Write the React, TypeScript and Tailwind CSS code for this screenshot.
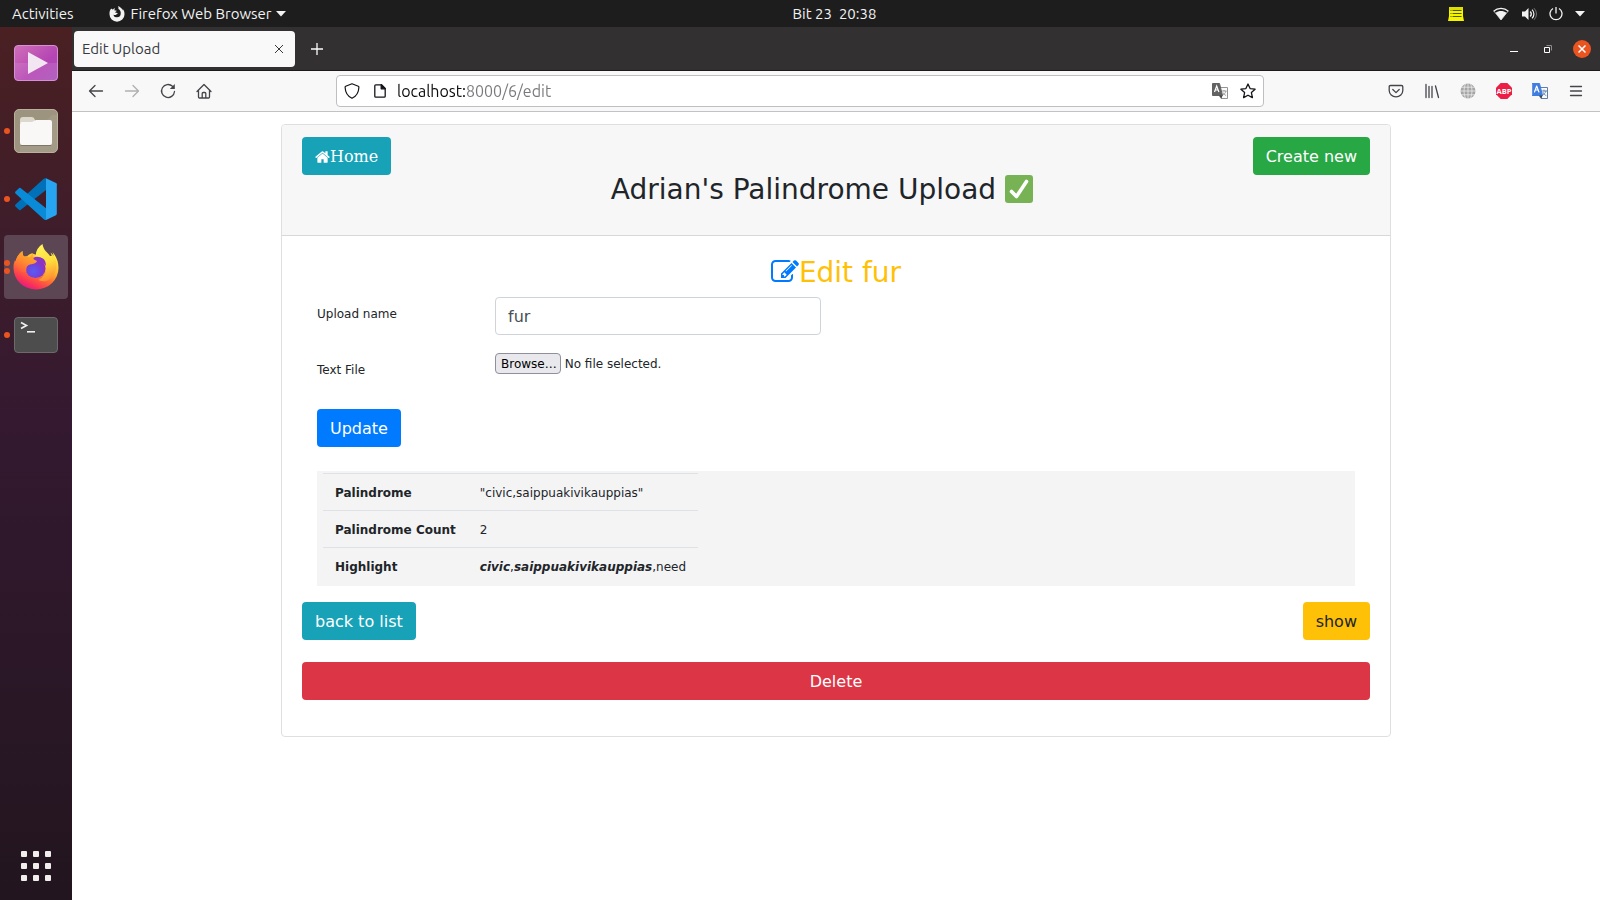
import type { ReactNode } from "react";

const UI_FONT = "font-['Ubuntu','Noto_Sans',sans-serif]";

function SystemBar() {
  return (
    <header className="flex h-[27px] shrink-0 items-center bg-[#1d1d1d] text-[15px] leading-5 text-[#f2f2f2]">
      <div className="flex flex-1 items-center pl-3">
        <button type="button">Activities</button>
        <button type="button" className="ml-[35px] flex items-center">
          <svg viewBox="0 0 16 16" className="mr-[6px] size-4" fill="#f2f2f2" aria-hidden="true">
            <path d="M2.200 2.400C.9 3.800.3 6 .5 8.300a7.500 7.300 0 0 0 15 .1c.1-2.300-.5-4.300-2-5.700.2.700.3 1.200.2 1.700C12.800 2.200 11 .9 9.100.1c.4 1.100.5 2 .3 2.900 1.800.8 2.600 2.800 2.300 4.900a3.900 3.900 0 0 1-7.600.6c.6.6 1.600.8 2.500.4C7.400 8.500 7.900 8 8.800 7.700c-.5-1-1.500-1.200-2.600-1 .1-.8.600-1.300 1.500-1.800-.6-.4-1.300-.4-2-.1-.3-.6-.3-1.500.1-2.700-.9.400-1.400.9-1.800 1.500-.6-.1-1.200-.5-1.800-1.200z" />
          </svg>
          Firefox Web Browser
          <svg viewBox="0 0 10 6" className="ml-1 h-[6px] w-[10px]" fill="#f2f2f2" aria-hidden="true">
            <path d="M0 0h10L5 5.500z" />
          </svg>
        </button>
      </div>
      <button type="button" className="whitespace-pre pl-[72px]">
        Bit 23  20:38
      </button>
      <div className="flex flex-1 items-center justify-end pr-[15px]">
        <svg viewBox="0 0 16 14" className="mr-[29px] h-[14px] w-4" aria-hidden="true">
          <path d="M1 0h14v9l1 5H0l1-5z" fill="#f4f400" />
          <path d="M1 0h14v3H1z" fill="#dede00" />
          <path d="M2.500 3.500h1m1 0h9m-11 3h1m1 0h9m-11 3h1m1 0h9" stroke="#55550a" strokeWidth="1" />
        </svg>
        <svg viewBox="0 0 16 14" className="mr-3 h-[14px] w-4" aria-hidden="true">
          <path d="M.6 4.200C4.800.4 11.200.4 15.400 4.200" fill="none" stroke="#f2f2f2" strokeWidth="1.200" />
          <path d="M2.500 6C5.700 3.400 10.300 3.400 13.500 6L8 13z" fill="#f2f2f2" />
          <path d="M1 4.200L8 13l7-8.800" fill="none" stroke="#f2f2f2" strokeWidth=".7" />
        </svg>
        <svg viewBox="0 0 16 14" className="mr-3 h-[14px] w-4" aria-hidden="true">
          <path d="M1 4.500h3L7.500 1v12L4 9.500H1z" fill="#f2f2f2" />
          <path d="M9.200 4.500a3.500 3.500 0 0 1 0 5" fill="none" stroke="#f2f2f2" strokeWidth="1.400" />
          <path d="M11 2.600a6 6 0 0 1 0 8.800" fill="none" stroke="#f2f2f2" strokeWidth="1.200" />
          <path d="M13 1.200a8 8 0 0 1 0 11.600" fill="none" stroke="#777" strokeWidth="1" />
        </svg>
        <svg viewBox="0 0 14 14" className="mr-3 size-[14px]" fill="none" stroke="#f2f2f2" strokeWidth="1.300" aria-hidden="true">
          <path d="M4 1.500a6 6 0 1 0 6 0M7 0v6.500" />
        </svg>
        <svg viewBox="0 0 10 6" className="h-[6px] w-[10px]" fill="#f2f2f2" aria-hidden="true">
          <path d="M0 0h10L5 5.500z" />
        </svg>
      </div>
    </header>
  );
}

function DockItem({ label, dots = 0, active = false, children }: { label: string; dots?: number; active?: boolean; children: ReactNode }) {
  return (
    <button
      type="button"
      aria-label={label}
      className={`relative flex size-16 items-center justify-center rounded-[4px] ${active ? "bg-[#5c4653]" : ""}`}
    >
      <span className="absolute inset-y-0 left-0 flex flex-col items-center justify-center gap-[2px]">
        {Array.from({ length: dots }, (_, i) => (
          <span key={i} className="size-[6px] rounded-full bg-[#e95420]" />
        ))}
      </span>
      {children}
    </button>
  );
}

function Dock() {
  return (
    <nav className="flex w-[72px] shrink-0 flex-col items-center gap-1 bg-linear-to-b from-[#4a2022] via-[#341930] via-45% to-[#22151f] pt-1">
      <DockItem label="Videos">
        <svg viewBox="0 0 44 36" className="h-9 w-11">
          <defs>
            <linearGradient id="video" x1="0" y1="0" x2="1" y2="1">
              <stop offset="0" stopColor="#d070b8" />
              <stop offset=".6" stopColor="#b545b4" />
              <stop offset="1" stopColor="#a850b8" />
            </linearGradient>
          </defs>
          <rect x=".5" y=".5" width="43" height="35" rx="3.500" fill="url(#video)" stroke="#d58fd6" />
          <path d="M1 18h42v14a3 3 0 0 1-3 3H4a3 3 0 0 1-3-3z" fill="#fff" opacity=".1" />
          <path d="M14 7L34 18 14 29z" fill="#f3e6f3" />
        </svg>
      </DockItem>
      <DockItem label="Files" dots={1}>
        <svg viewBox="0 0 44 44" className="size-11">
          <rect x=".5" y=".5" width="43" height="43" rx="4.500" fill="#9d947f" stroke="#b8b29d" />
          <path d="M6 38L38 6h5v33a4 4 0 0 1-4 4H6z" fill="#fff" opacity=".07" />
          <path d="M6 11q0-3 3-3h9q2 0 3 3l1 3h-16z" fill="#dcd8cb" />
          <path d="M6 15q0-2 2-2h10l4-2h14q2 0 2 2v21q0 2-2 2H8q-2 0-2-2z" fill="#f9f8f6" />
          <path d="M7 36.500h30" stroke="#7e7765" />
        </svg>
      </DockItem>
      <DockItem label="Visual Studio Code" dots={1}>
        <svg viewBox="0 0 42 42" className="size-[42px]">
          <path d="M31 .3V12L5.500 32q-.7.500-1.300 0L.5 28.600q-.9-1 0-2L28.500.9Q29.600 0 31 .3z" fill="#0071b8" />
          <path d="M31 30.300V42q-1.500.1-2.500-.9L.5 15.400q-.9-1 0-2L4.200 10q.6-.5 1.300 0z" fill="#0a8bd8" />
          <path d="M31 .2l10 4.700q.8.500.8 1.400v29.500q0 .9-.8 1.400L31 42z" fill="#27a5f0" />
        </svg>
      </DockItem>
      <DockItem label="Firefox" dots={2} active>
        <svg viewBox="0 0 46 46" className="size-[46px]">
          <defs>
            <linearGradient id="flame" x1=".85" y1=".1" x2=".3" y2="1">
              <stop offset="0" stopColor="#fff04a" />
              <stop offset=".35" stopColor="#ffb32e" />
              <stop offset=".6" stopColor="#ff6a35" />
              <stop offset=".85" stopColor="#f9305a" />
              <stop offset="1" stopColor="#e2178c" />
            </linearGradient>
            <radialGradient id="globe" cx=".4" cy=".65" r=".65">
              <stop offset="0" stopColor="#5a5cf2" />
              <stop offset=".55" stopColor="#7042dc" />
              <stop offset="1" stopColor="#9a2cb4" />
            </radialGradient>
            <linearGradient id="crest" x1=".4" y1="0" x2=".6" y2="1">
              <stop offset="0" stopColor="#fff35a" />
              <stop offset=".5" stopColor="#ffdc3c" />
              <stop offset="1" stopColor="#ff8a32" />
            </linearGradient>
            <linearGradient id="head" x1=".7" y1="0" x2=".2" y2="1">
              <stop offset="0" stopColor="#ffb02c" />
              <stop offset=".5" stopColor="#ff8f30" />
              <stop offset="1" stopColor="#ff5a3c" />
            </linearGradient>
          </defs>
          <path d="M4.500 12.500Q6.500 9 9.500 7q-.2 4 1.500 5.500l3-.3q2.500-2.400 5-3L26 12h14.500q-.2-2.500-1-4Q45.500 15 45.500 24A22.500 21.500 0 0 1 .5 24Q.3 20 2 16l.6 1.500Q3 14.500 4.500 12.500z" fill="url(#flame)" />
          <path d="M22.500 12Q23 4 29.500 0 30 5 34.500 9q3.500 3.500 4.500 6.500.2-4-1.500-7Q45 14 43 25q-1.500 8-9.500 12-4 1-8-1 8-4 7.500-12Q32.500 16 22.500 12z" fill="url(#crest)" />
          <ellipse cx="22.500" cy="24.500" rx="10" ry="9.500" fill="url(#globe)" />
          <path d="M20 14q5-2.500 10 .5 3 2 3 7.500-3-4-6.500-4-4 0-6.500-4z" fill="#8a35c8" />
          <path d="M4.500 12.500Q6.500 9 9.500 7q-.2 4 1.500 5.500 3.500-.5 6 1Q18.500 11 20 9.200q-.5 4 .5 6l3.500 1.800q-.5 2-4.500 3-5.500.5-6 4-.5 2 0 4Q8 29 5.500 25 2 18 4.500 12.500z" fill="url(#head)" />
        </svg>
      </DockItem>
      <DockItem label="Terminal" dots={1}>
        <svg viewBox="0 0 44 36" className="h-9 w-11">
          <rect x=".5" y=".5" width="43" height="35" rx="3.500" fill="#4d4d4d" stroke="#6b6b6b" />
          <path d="M7 5.500l5.500 3L7 11.500" fill="none" stroke="#f0f0f0" strokeWidth="1.700" />
          <path d="M13 14.800h8" stroke="#f0f0f0" strokeWidth="1.600" />
        </svg>
      </DockItem>
      <button type="button" aria-label="Show applications" className="mt-auto mb-[19px] grid grid-cols-3 gap-[6px]">
        {Array.from({ length: 9 }, (_, i) => (
          <span key={i} className="size-[6px] rounded-[1px] bg-[#f0efeb]" />
        ))}
      </button>
    </nav>
  );
}

function TabStrip() {
  return (
    <div className="flex h-11 shrink-0 items-start border-b border-[#1c1a1b] bg-[#333031] pt-1 pl-[2px]">
      <div className="flex h-9 w-[221px] items-center justify-between rounded-[4px] bg-[#f9f9fa] pr-[11px] pl-2 text-[15px] text-[#3a3940]">
        Edit Upload
        <button type="button" aria-label="Close tab">
          <svg viewBox="0 0 10 10" className="size-[10px]" stroke="#3a3940" strokeWidth="1">
            <path d="M1 1l8 8M9 1L1 9" />
          </svg>
        </button>
      </div>
      <button type="button" aria-label="New tab" className="ml-4 flex h-9 items-center">
        <svg viewBox="0 0 12 12" className="size-3" stroke="#fbfbfe" strokeWidth="1.300">
          <path d="M6 0v12M0 6h12" />
        </svg>
      </button>
      <div className="ml-auto flex h-9 items-center pr-[9px]">
        <button type="button" aria-label="Minimize">
          <svg viewBox="0 0 8 8" className="size-2" stroke="#fff" strokeWidth="1">
            <path d="M0 6.500h8" />
          </svg>
        </button>
        <button type="button" aria-label="Restore" className="ml-[26px]">
          <svg viewBox="0 0 8 8" className="size-2" fill="none">
            <path d="M2.500.5h5v5" stroke="#8d8b8c" />
            <path d="M.5 2.500h5v5h-5z" stroke="#fff" strokeWidth="1" />
          </svg>
        </button>
        <button type="button" aria-label="Close window" className="ml-[21px] flex size-[18px] items-center justify-center rounded-full bg-[#e95420]">
          <svg viewBox="0 0 8 8" className="size-2" stroke="#fff" strokeWidth="1.500">
            <path d="M.5.5l7 7M7.500.5l-7 7" />
          </svg>
        </button>
      </div>
    </div>
  );
}

function ToolButton({ label, children }: { label: string; children: ReactNode }) {
  return (
    <button type="button" aria-label={label} className="flex h-8 w-9 shrink-0 items-center justify-center">
      <svg viewBox="0 0 16 16" className="size-4" fill="none" stroke="#45444b" strokeWidth="1.300" strokeLinecap="round" strokeLinejoin="round">
        {children}
      </svg>
    </button>
  );
}

function TranslateGlyph({ front, back }: { front: string; back: string }) {
  return (
    <>
      <path d="M7 4.500h8.500v11H9L7 12z" fill="#fbfbfb" stroke={back} strokeWidth="1" />
      <path d="M10 8h4.500M12 7v1m2 0c-.5 2-2 3.500-3.500 4M11 9.500c.5 1.500 2 2.500 3 3" stroke={back} strokeWidth=".9" />
      <path d="M.5.500h7l3 12H.5z" fill={front} stroke={front} strokeWidth="1" />
      <path d="M2.500 9L4.700 3l2.200 6M3.300 7h2.800" stroke="#fff" strokeWidth="1.200" />
      <path d="M7 12.500h3.500l-1 3z" fill="#444" stroke="none" />
    </>
  );
}

function Toolbar() {
  return (
    <div className="flex h-[41px] shrink-0 items-center border-b border-[#c2c2c4] bg-[#f8f8f8] px-[6px]">
      <ToolButton label="Back">
        <path d="M14.500 8H1.500M7 2.500L1.500 8 7 13.500" />
      </ToolButton>
      <ToolButton label="Forward">
        <path d="M1.500 8h13M9 2.500L14.500 8 9 13.500" stroke="#b0b0b2" />
      </ToolButton>
      <ToolButton label="Reload">
        <path d="M14.500 8.500a6.500 6.500 0 1 1-2-5.200" />
        <path d="M14.800 1v5h-5z" fill="#45444b" stroke="none" />
      </ToolButton>
      <ToolButton label="Home">
        <path d="M1 8.500L8 1.500l7 7M2.500 7.500V14q0 1 1 1h9q1 0 1-1V7.500M6.200 15v-4.500q0-1 1-1h1.600q1 0 1 1V15" />
      </ToolButton>
      <div className="flex-[57]" />
      <div className="flex h-8 min-w-0 flex-[456] items-center rounded-[4px] border border-[#bfbfc3] bg-white px-[7px]">
        <svg viewBox="0 0 16 16" className="size-4 shrink-0" fill="none" stroke="#15141a" strokeWidth="1.200" strokeLinejoin="round" aria-hidden="true">
          <path d="M8 .8l6.300 2.500q.6.300.6 1C14.700 9.500 12 13.500 8 15.300 4 13.500 1.300 9.500 1.100 4.300q0-.7.600-1z" />
        </svg>
        <svg viewBox="0 0 12 14" className="ml-[14px] h-[14px] w-3 shrink-0" fill="none" stroke="#15141a" strokeWidth="1.300" strokeLinejoin="round" aria-hidden="true">
          <path d="M1.800.8H7.500L11.200 4.500v7.700q0 1-1 1H1.800q-1 0-1-1V1.800q0-1 1-1z" />
          <path d="M7.200.8v4h4z" fill="#15141a" />
        </svg>
        <input
          type="text"
          aria-label="Address"
          defaultValue="localhost:8000/6/edit"
          className="ml-[11px] min-w-0 flex-1 bg-[linear-gradient(to_right,#0c0c0d_68px,#77777c_68px)] bg-clip-text text-[16px] leading-6 text-transparent caret-black outline-none"
        />
        <button type="button" aria-label="Translate page">
          <svg viewBox="0 0 16 16" className="size-4" fill="none">
            <TranslateGlyph front="#626262" back="#949494" />
          </svg>
        </button>
        <button type="button" aria-label="Bookmark" className="ml-3">
          <svg viewBox="0 0 16 16" className="size-4" fill="none" stroke="#15141a" strokeWidth="1.300" strokeLinejoin="round">
            <path d="M8 1l2.100 4.600 5 .6-3.700 3.400 1 5L8 12.200l-4.400 2.400 1-5L.9 6.200l5-.6z" />
          </svg>
        </button>
      </div>
      <div className="flex-[57]" />
      <ToolButton label="Pocket">
        <path d="M2.500 2.500h11q1.300 0 1.300 1.300V7.500a6.800 6.300 0 0 1-13.600 0V3.800q0-1.300 1.300-1.300z" />
        <path d="M4.800 6.500L8 9.600l3.200-3.100" />
      </ToolButton>
      <ToolButton label="Library">
        <path d="M2 1.500v13M5 3.500v11M8 3.500v11M11.500 3l3 11.500" />
      </ToolButton>
      <ToolButton label="Web">
        <circle cx="8" cy="8" r="7.500" fill="#a5a5a7" stroke="none" />
        <path d="M8 0v16M0 8h16M1.500 4.200h13M1.500 11.800h13M5.500 1C3.500 5 3.500 11 5.500 15M10.500 1c2 4 2 10 0 14" stroke="#ececec" strokeWidth=".8" />
      </ToolButton>
      <button type="button" aria-label="Adblock Plus" className="flex h-8 w-9 shrink-0 items-center justify-center">
        <svg viewBox="0 0 16 16" className="size-4">
          <path d="M4.700 0h6.600L16 4.700v6.600L11.300 16H4.700L0 11.300V4.700z" fill="#ed1e45" />
          <text x="8" y="10.700" textAnchor="middle" fontSize="7.500" fontWeight="700" fill="#fff" className="font-['Open_Sans',sans-serif]">
            ABP
          </text>
        </svg>
      </button>
      <ToolButton label="Translate">
        <TranslateGlyph front="#3f7de0" back="#5f7fa8" />
      </ToolButton>
      <ToolButton label="Menu">
        <path d="M2.500 3.500h11M2.500 8h11M2.500 12.500h11" />
      </ToolButton>
    </div>
  );
}

const BUTTON = "inline-flex h-[38px] items-center justify-center rounded-[4px] px-[13px] pt-[2px] text-[16px] leading-6";

function UploadForm() {
  return (
    <form className="flex flex-col gap-4" onSubmit={(event) => event.preventDefault()}>
      <div className="grid min-h-10 grid-cols-12 items-start">
        <label htmlFor="upload-name" className="col-span-2 px-[15px] pt-2">
          Upload name
        </label>
        <div className="col-span-4 px-[15px]">
          <input
            id="upload-name"
            type="text"
            defaultValue="fur"
            className="block h-[38px] w-full rounded-[4px] border border-[#ced4da] bg-white px-3 text-[16px] text-[#495057]"
          />
        </div>
      </div>
      <div className="grid min-h-10 grid-cols-12 items-start">
        <label htmlFor="text-file" className="col-span-2 px-[15px] pt-2">
          Text File
        </label>
        <div className="col-span-4 px-[15px]">
          <input id="text-file" type="file" className="peer sr-only" />
          <label htmlFor="text-file" className="flex items-center gap-1">
            <span className="flex h-[21px] items-center rounded-[4px] border border-[#8f8f9d] bg-[#e9e9ed] pr-[3px] pl-[5px] text-black">Browse…</span>
            No file selected.
          </label>
        </div>
      </div>
      <div className="px-[15px]">
        <button type="submit" className={`${BUTTON} bg-[#007bff] text-white`}>
          Update
        </button>
      </div>
    </form>
  );
}

function ResultTable() {
  const head = "h-[37px] px-3 pt-[2px] text-left font-bold";
  const cell = "h-[37px] px-3 pt-[2px]";
  const row = "border-t border-[#dee2e6]";
  return (
    <div className="mx-[15px] mt-6 bg-[#f4f4f4] px-[6px] pt-[2px] pb-px">
      <table className="border-collapse">
        <tbody>
          <tr className={row}>
            <th scope="row" className={head}>Palindrome</th>
            <td className={cell}>"civic,saippuakivikauppias"</td>
          </tr>
          <tr className={row}>
            <th scope="row" className={head}>Palindrome Count</th>
            <td className={cell}>2</td>
          </tr>
          <tr className={row}>
            <th scope="row" className={head}>Highlight</th>
            <td className={cell}>
              <b><i>civic</i></b>,<b><i>saippuakivikauppias</i></b>,need
            </td>
          </tr>
        </tbody>
      </table>
    </div>
  );
}

function UploadCard() {
  return (
    <section className="mx-auto max-w-[1110px] rounded-[4px] border border-[#dfdfdf] bg-white text-[12px] leading-[18px] text-[#212529]">
      <div className="flex items-start rounded-t-[3px] border-b border-[#d8d8d8] bg-[#f7f7f7] px-5 pt-3 pb-7">
        <a href="#home" className={`${BUTTON} bg-[#17a2b8] font-['DejaVu_Serif',serif] text-white`}>
          <svg viewBox="64 0 1664 1792" className="h-4 w-[15px]" fill="currentColor" aria-hidden="true">
            <path d="M1472 992v480q0 26-19 45t-45 19h-384v-384h-256v384h-384q-26 0-45-19t-19-45v-480q0-1 .5-3t.5-3l575-474 575 474q1 2 1 6zm223-69l-62 74q-8 9-21 11h-3q-13 0-21-7l-692-577-692 577q-12 8-24 7-13-2-21-11l-62-74q-8-10-7-23.500t11-21.500l719-599q32-26 76-26t76 26l244 204v-195q0-14 9-23t23-9h192q14 0 23 9t9 23v408l219 182q10 8 11 21.500t-7 23.500z" />
          </svg>
          Home
        </a>
        <h1 className="mt-9 flex flex-1 items-center justify-center gap-[9px] text-[28px] leading-[34px]">
          Adrian's Palindrome Upload
          <svg viewBox="0 0 28 28" className="mb-[2px] size-7" role="img" aria-label="done">
            <rect width="28" height="28" rx="3" fill="#77b255" />
            <path d="M6.500 16.500l5 5L21.500 6.500" fill="none" stroke="#fff" strokeWidth="3.600" strokeLinecap="round" strokeLinejoin="round" />
          </svg>
        </h1>
        <a href="#new" className={`${BUTTON} bg-[#28a745] text-white`}>
          Create new
        </a>
      </div>
      <div className="px-5 pt-5 pb-9">
        <h2 className="mb-2 flex items-center justify-center text-[28px] leading-[33px] text-[#ffc107]">
          <svg viewBox="0 0 1792 1792" className="mb-[2px] size-7" fill="#007bff" aria-hidden="true">
            <path d="M888 1184l116-116-152-152-116 116v56h96v96h56zm440-720q-16-16-33 1l-350 350q-17 17-1 33t33-1l350-350q17-17 1-33zm80 594v190q0 119-84.500 203.500t-203.500 84.500h-832q-119 0-203.500-84.500t-84.500-203.500v-832q0-119 84.500-203.500t203.500-84.500h832q63 0 117 25 15 7 18 23 3 17-9 29l-49 49q-14 14-32 8-23-6-45-6h-832q-66 0-113 47t-47 113v832q0 66 47 113t113 47h832q66 0 113-47t47-113v-126q0-13 9-22l64-64q15-15 35-7t20 29zm-96-738l288 288-672 672h-288v-288zm444 132l-92 92-288-288 92-92q28-28 68-28t68 28l152 152q28 28 28 68t-28 68z" />
          </svg>
          Edit fur
        </h2>
        <UploadForm />
        <ResultTable />
        <div className="mt-4 flex justify-between">
          <a href="#list" className={`${BUTTON} bg-[#17a2b8] text-white`}>
            back to list
          </a>
          <a href="#show" className={`${BUTTON} bg-[#ffc107]`}>
            show
          </a>
        </div>
        <button type="button" className={`${BUTTON} mt-[22px] w-full bg-[#dc3545] text-white`}>
          Delete
        </button>
      </div>
    </section>
  );
}

export default function App() {
  return (
    <div className={`flex min-h-screen flex-col ${UI_FONT}`}>
      <SystemBar />
      <div className="flex flex-1">
        <Dock />
        <div className="flex min-w-0 flex-1 flex-col">
          <TabStrip />
          <Toolbar />
          <main className="flex-1 bg-white px-4 py-3 font-['DejaVu_Sans',sans-serif]">
            <UploadCard />
          </main>
        </div>
      </div>
    </div>
  );
}
